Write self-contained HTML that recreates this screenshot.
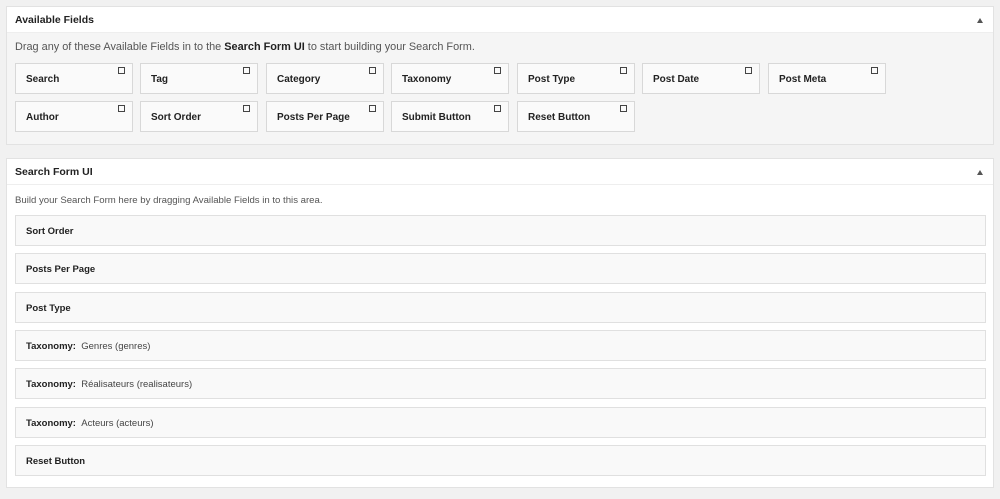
<!DOCTYPE html>
<html><head><style>
*{box-sizing:border-box;margin:0;padding:0}
body{width:1000px;height:499px;background:#f1f1f1;font-family:"Liberation Sans",sans-serif;font-size:10px;color:#222;position:relative;overflow:hidden}
.panel{position:absolute;left:6px;width:988px;border:1px solid #e2e2e2;}
.hd{height:26px;background:#fff;border-bottom:1px solid #eee;font-weight:bold;font-size:10.5px;padding:7px 8px;position:relative}
.hd:after{content:"";position:absolute;right:10px;top:11px;border-left:3px solid transparent;border-right:3px solid transparent;border-bottom:5px solid #555}
.desc{position:absolute;left:8px;font-size:9.6px;color:#555}
.f{position:absolute;width:118px;height:31px;background:#fafafa;border:1px solid #d8d8d8;font-weight:bold;padding:10px 10px;font-size:10px}
.f i{position:absolute;right:7px;top:3px;width:7px;height:7px;border:1px solid #444}
.r{position:absolute;left:8px;width:971px;height:31px;background:#f9f9f9;border:1px solid #e0e0e0;font-weight:bold;padding:10px 10px;font-size:9.5px}
.r span{font-weight:normal;color:#444}
</style></head><body>
<div class="panel" style="top:6px;height:139px;background:#f5f5f5">
<div class="hd">Available Fields</div>
<div class="desc" style="top:34px;font-size:10.9px">Drag any of these Available Fields in to the <b style="color:#222">Search Form UI</b> to start building your Search Form.</div>
<div class="f" style="left:8px;top:56px">Search<i></i></div>
<div class="f" style="left:133px;top:56px">Tag<i></i></div>
<div class="f" style="left:259px;top:56px">Category<i></i></div>
<div class="f" style="left:384px;top:56px">Taxonomy<i></i></div>
<div class="f" style="left:510px;top:56px">Post Type<i></i></div>
<div class="f" style="left:635px;top:56px">Post Date<i></i></div>
<div class="f" style="left:761px;top:56px">Post Meta<i></i></div>
<div class="f" style="left:8px;top:94px">Author<i></i></div>
<div class="f" style="left:133px;top:94px">Sort Order<i></i></div>
<div class="f" style="left:259px;top:94px">Posts Per Page<i></i></div>
<div class="f" style="left:384px;top:94px">Submit Button<i></i></div>
<div class="f" style="left:510px;top:94px">Reset Button<i></i></div>
</div>
<div class="panel" style="top:158px;height:330px;background:#fff">
<div class="hd">Search Form UI</div>
<div class="desc" style="top:36px">Build your Search Form here by dragging Available Fields in to this area.</div>
<div class="r" style="top:56px">Sort Order</div>
<div class="r" style="top:94px">Posts Per Page</div>
<div class="r" style="top:133px">Post Type</div>
<div class="r" style="top:171px">Taxonomy:&nbsp; <span>Genres (genres)</span></div>
<div class="r" style="top:209px">Taxonomy:&nbsp; <span>Réalisateurs (realisateurs)</span></div>
<div class="r" style="top:248px">Taxonomy:&nbsp; <span>Acteurs (acteurs)</span></div>
<div class="r" style="top:286px">Reset Button</div>
</div>
</body></html>
